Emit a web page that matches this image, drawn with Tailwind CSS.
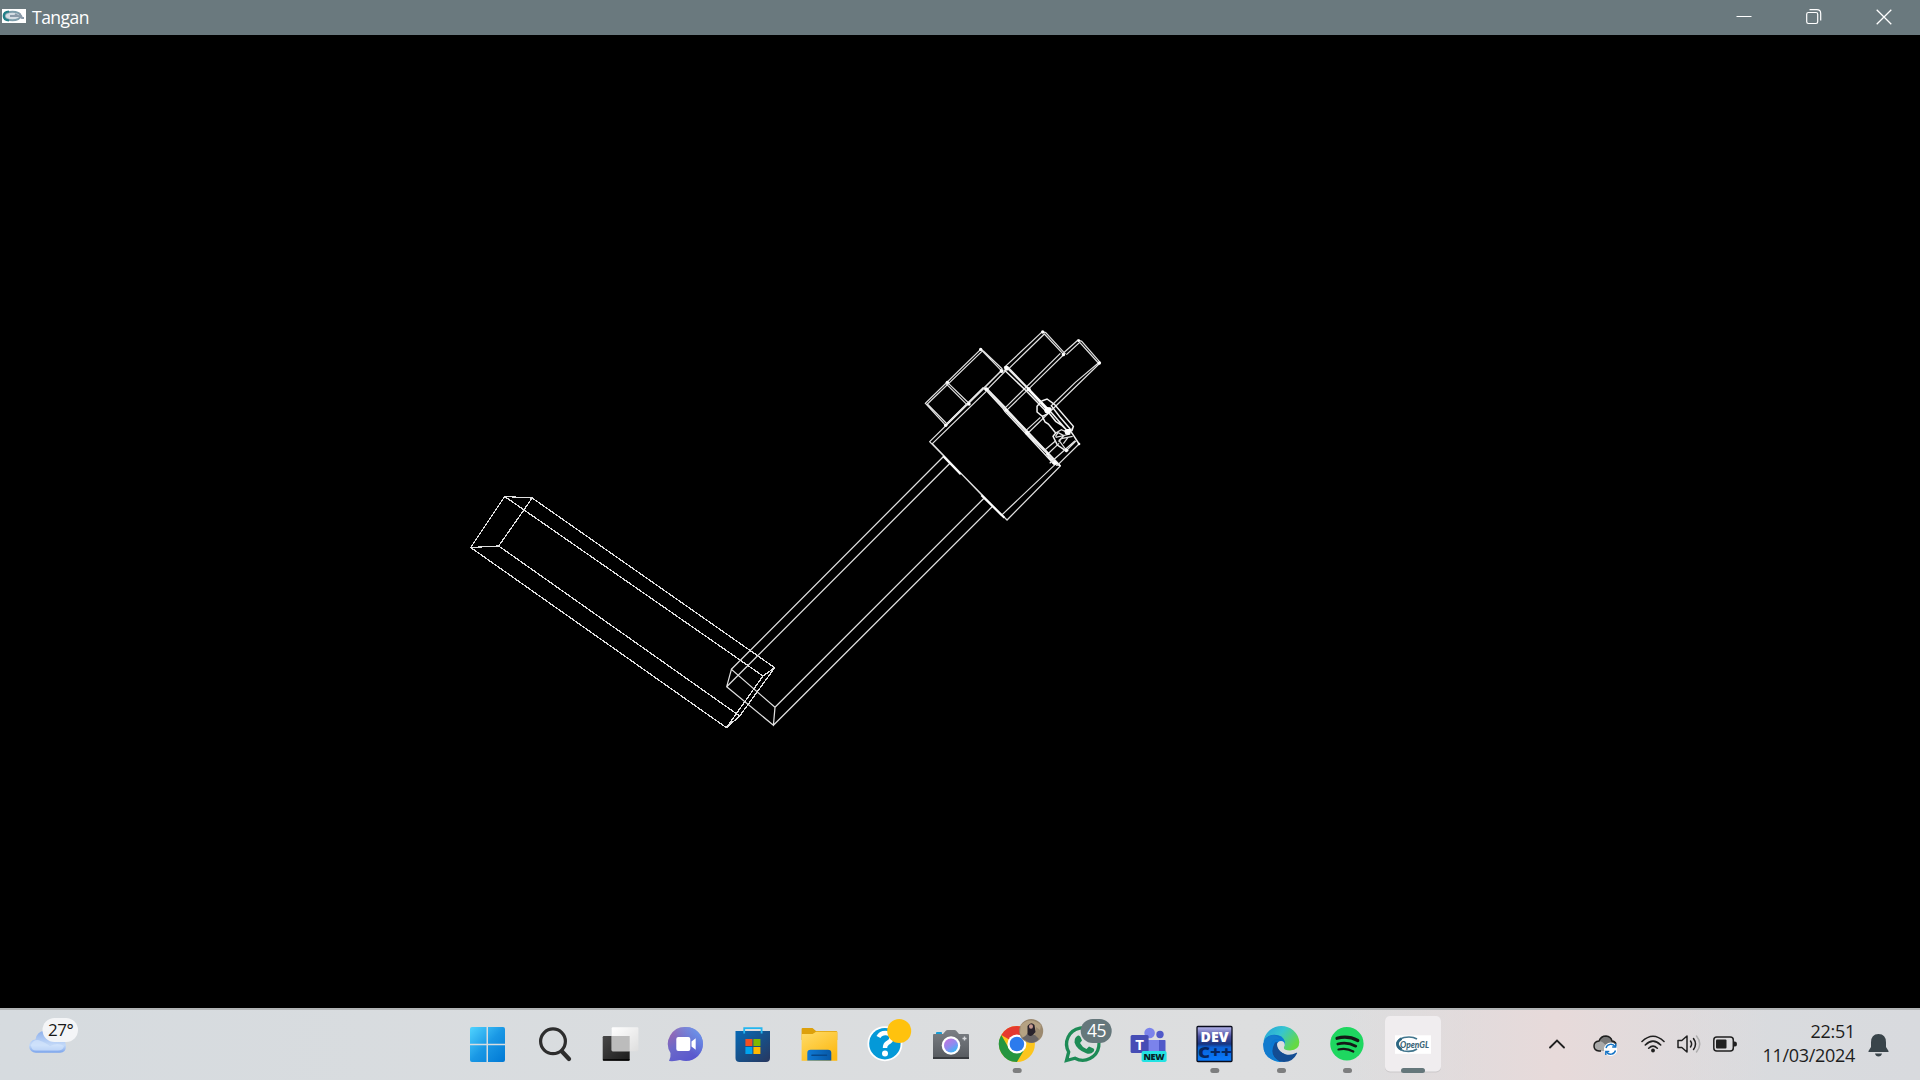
<!DOCTYPE html>
<html lang="id">
<head>
<meta charset="utf-8">
<title>Tangan</title>
<script src="https://cdn.jsdelivr.net/npm/@tailwindcss/browser@4"></script>
</head>
<body class="flex h-[1080px] w-[1920px] flex-col overflow-hidden bg-black font-['Open_Sans','Noto_Sans',sans-serif]">
<header class="flex h-[35px] shrink-0 items-center bg-[#6a797e] text-white">
  <svg class="ml-[2px] mt-[-3px] h-[14px] w-6" viewBox="0 0 24 14">
    <rect width="24" height="14" fill="#fff"/>
    <ellipse cx="10.500" cy="7" rx="8" ry="4.300" fill="#d3dce3" stroke="#7d9dab" stroke-width="2"/>
    <path d="M7 2.500C0 3 0 11 7 11.500" fill="none" stroke="#207f87" stroke-width="2.200"/>
    <path d="M8 7h8M13 5l7 4h2M17 4l3 4" fill="none" stroke="#8999a8" stroke-width="1.800"/>
  </svg>
  <h1 class="ml-[6px] -mt-px text-[17.500px] leading-6 font-normal tracking-[-0.5px]">Tangan</h1>
  <div class="ml-auto mr-[28px] mt-[-2px] flex items-center gap-[54px]">
    <svg class="h-4 w-4" viewBox="0 0 16 16"><path d="M.500 7.500h15" stroke="#fff" fill="none"/></svg>
    <svg class="h-4 w-4" viewBox="1 0.500 16 16" fill="none" stroke="#fff" stroke-width="1.200"><rect x="1.700" y="4" width="11" height="11" rx="1.700"/><path d="M4.500 1.200h7.200Q15.700 1.200 15.700 5v7"/></svg>
    <svg class="h-4 w-4" viewBox="0 0 16 16"><path d="M.700.700l14.600 14.600M15.300.700.700 15.300" stroke="#fff" stroke-width="1.300" fill="none"/></svg>
  </div>
</header>

<main class="h-[973px] shrink-0 bg-black">
  <svg class="block h-[973px] w-[1920px]" viewBox="0.300 35 1920 973" fill="none" stroke="#e0e0e0" stroke-width="1.250">
    <!-- upper arm -->
    <path d="M505 496.500L532.500 498L499 546L471 547.500ZM775 667.700L763.300 676L726.700 727.700L740 716ZM505 496.500L763.300 676M532.500 498L775 667.700M471 547.500L726.700 727.700M499 546L740 716" shape-rendering="crispEdges"/>
    <!-- forearm -->
    <path d="M731.700 669.300L727 686.700L773.700 725.300L775.300 707.300ZM731.700 669.300L943.300 457M727 686.700L950 463.500M775.300 707.300L984 498.500M773.700 725.300L992.700 506.500"/>
    <!-- hand -->
    <g transform="translate(910 320) scale(.33333)" stroke-width="3.700">
      <path d="M60 365L222 205L232 209L452 438L292 600ZM68 371L232 212L440 430L275 586ZM60 365L292 600"/>
      <path d="M100 408L153 463M215 526L284 593M108 316L222 203M452 438L425 417" stroke="#fff" stroke-width="6"/>
      <path d="M213 88L275 152L108 316L47 250ZM219 92L53 252L112 312M113 187L180 252M108 190L174 256M213 88L222 94L278 147"/>
      <path d="M275 152L225 203M290 150L233 208"/>
      <path d="M283 143L398 35L408 38L466 101L462 104M292 151L404 42L462 104L290 272M452 100L284 266"/>
      <path d="M462 98L505 60L516 64L572 128L352 342M470 104L510 67L566 129L497 187L424 258M392 292L346 334"/>
      <path d="M234 208L447 432M244 218L287 262L294 277L350 334L358 347L410 398L418 411L442 437M232 214L280 266L286 275L344 336L352 345L402 399L432 432" stroke="#efefef" stroke-width="4"/>
      <path d="M290 142L355 207L364 215L414 268M284 150L350 213L412 277M294 141L418 269" stroke="#efefef" stroke-width="4.500"/>
      <path d="M354 206L414 270" stroke="#fff" stroke-width="7"/>
      <g stroke="#f2f2f2" stroke-width="4.500">
        <path d="M396 243L412 237L434 253L491 319L487 331L470 329L415 266M396 243L382 259V276L398 289L416 280M398 289L406 306L416 312L438 339L430 349L443 375L462 388L471 396M508 372L490 344L480 330M415 275L438 304L455 315L477 336M424 256L450 290L481 326"/>
      </g>
      <path d="M438 339L455 329L477 339M438 352L482 342M447 366L455 356L489 349M461 371L475 352M437 350L445 338L463 347L448 361L470 391M508 372L442 437M496 362L420 430M438 362L402 393M448 370L411 405M471 391L500 362"/>
      <path d="M416 272l8-8M465 335l14-4-3 10" stroke="#fff" stroke-width="9"/>
      <g fill="#fff" stroke="none"><circle cx="213" cy="88" r="5"/><circle cx="113" cy="187" r="5"/><circle cx="178" cy="252" r="5"/><circle cx="276" cy="153" r="6"/><circle cx="290" cy="144" r="7"/><circle cx="399" cy="36" r="5"/><circle cx="461" cy="104" r="5"/><circle cx="507" cy="62" r="4"/><circle cx="569" cy="129" r="5"/><circle cx="230" cy="208" r="6"/><circle cx="108" cy="316" r="5"/><circle cx="290" cy="271" r="5"/><circle cx="352" cy="338" r="6"/><circle cx="357" cy="208" r="6"/><circle cx="414" cy="271" r="10"/><circle cx="414" cy="402" r="4"/><circle cx="434" cy="430" r="5"/><circle cx="508" cy="372" r="4"/><circle cx="474" cy="336" r="9"/><circle cx="471" cy="391" r="5"/></g>
    </g>
  </svg>
</main>

<footer class="flex h-[72px] shrink-0 border-t-2 border-[#b1b4b5] bg-linear-to-r from-[#d6dbdf] via-[#dddedf] via-65% to-[#d8dade]">
 <div class="flex h-[70px] w-full bg-linear-to-r from-transparent from-70% via-[#e7dada] via-81% to-transparent to-92%">
  <svg class="-mt-[2px] h-[72px] w-[454px] shrink-0" viewBox="0 0 454 72">
    <defs>
      <linearGradient id="cl" x2="0" y2="1"><stop stop-color="#8fb1ec"/><stop offset=".65" stop-color="#c3d9f8"/><stop offset="1" stop-color="#7ba4ec"/></linearGradient>
      <linearGradient id="win" x2="1" y2="1"><stop stop-color="#50d4ff"/><stop offset=".5" stop-color="#1a98e5"/><stop offset="1" stop-color="#0078d4"/></linearGradient>
      <linearGradient id="dark" x2="1" y2="1"><stop stop-color="#484848"/><stop offset="1" stop-color="#1b1b1b"/></linearGradient>
      <linearGradient id="lite" x2="1" y2="1"><stop stop-color="#fff"/><stop offset="1" stop-color="#dedede"/></linearGradient>
      <linearGradient id="chat" x2=".7" y2="1"><stop stop-color="#a768ab"/><stop offset=".5" stop-color="#6b68c9"/><stop offset="1" stop-color="#5755ce"/></linearGradient>
      <linearGradient id="chat2" x1="1" y1="0" x2="0" y2="1"><stop stop-color="#6ba0f3"/><stop offset=".55" stop-color="#6ba0f3" stop-opacity="0"/></linearGradient>
      <linearGradient id="store" x2="1" y2="1"><stop stop-color="#0669b5"/><stop offset="1" stop-color="#28375e"/></linearGradient>
      <linearGradient id="fold" x2=".7" y2="1"><stop stop-color="#ffdc69"/><stop offset="1" stop-color="#fcb913"/></linearGradient>
      <linearGradient id="blue"><stop stop-color="#0f7ad5"/><stop offset="1" stop-color="#0758a6"/></linearGradient>
      <linearGradient id="cam" x2="0" y2="1"><stop stop-color="#7b7f84"/><stop offset="1" stop-color="#55595e"/></linearGradient>
      <linearGradient id="lens" x2=".7" y2="1"><stop stop-color="#cb70dc"/><stop offset=".6" stop-color="#8c8cf0"/><stop offset="1" stop-color="#35b8f6"/></linearGradient>
      <linearGradient id="dev" x2="0" y2="1"><stop stop-color="#b9b9ef"/><stop offset=".28" stop-color="#4a50a0"/><stop offset=".5" stop-color="#19357f"/><stop offset=".6" stop-color="#0b63d8"/><stop offset="1" stop-color="#087cff"/></linearGradient>
      <linearGradient id="edge1" x2="1" y2=".55"><stop stop-color="#249fdb"/><stop offset=".5" stop-color="#36c5d0"/><stop offset="1" stop-color="#65d944"/></linearGradient>
      <linearGradient id="edge2" x2=".7" y2="1"><stop stop-color="#1468b4"/><stop offset=".4" stop-color="#0a79d5"/><stop offset="1" stop-color="#0c8de2"/></linearGradient>
    </defs>
    <path d="M36 44.800a6.500 6.500 0 0 1-.500-13.300q1.500-8.500 9-8.500 7 0 9 7 12.500-1 12.500 7.500 0 7.300-6 7.300Z" fill="url(#cl)"/>
    <path d="M31 37q3-7 10-4 5 2 9 5 8-4 14 0-1 4.500-6 4.500H36q-5 0-5-5.500Z" fill="#d6e7fc" opacity=".65"/>
    <rect x="42.500" y="10" width="35.500" height="24" rx="12" fill="#f6f7f8" fill-opacity=".95"/>
    <text x="48" y="27.800" font-size="17" letter-spacing="-.5" fill="#191919">27°</text>
  </svg>

  <nav class="-mt-[2px] grid h-[72px] w-[992px] shrink-0 grid-cols-[repeat(15,66.14px)]">
    <svg class="h-[72px] w-[66px]" viewBox="0 0 66 72"><path d="M18 19H32.500V35.700H16V21q0-2 2-2ZM34 19H49q2 0 2 2V35.700H34ZM16 37.200H32.500V54H18q-2 0-2-2ZM34 37.200H51V52q0 2-2 2H34Z" fill="url(#win)"/></svg>
    <svg class="h-[72px] w-[66px]" viewBox="0 0 66 72" fill="none" stroke="#2d2d2d"><circle cx="33" cy="33.300" r="12.400" stroke-width="3.200"/><path d="M42 43.500L49 51" stroke-width="4.300" stroke-linecap="round"/></svg>
    <svg class="h-[72px] w-[66px]" viewBox="0 0 66 72"><rect x="16.700" y="28" width="27" height="25" rx="1.200" fill="url(#dark)"/><path d="M17 51.700h26.500" stroke="#000"/><rect x="25.700" y="19.300" width="26.700" height="24" rx="1.200" fill="url(#lite)"/><path d="M25.700 28h18v15.300h-17q-1 0-1-1Z" fill="#bcbcbc"/></svg>
    <svg class="h-[72px] w-[66px]" viewBox="0 0 66 72"><path d="M34 19a17 17 0 0 1 0 34q-3 0-6-1-5 1.500-11 1 2-4 1.500-8a17 17 0 0 1 15.500-26Z" fill="url(#chat)"/><path d="M34 19a17 17 0 0 1 0 34q-3 0-6-1-5 1.500-11 1 2-4 1.500-8a17 17 0 0 1 15.500-26Z" fill="url(#chat2)"/><rect x="24.300" y="29" width="14" height="14" rx="2" fill="#fff"/><path d="M39.500 33.500l4.200-3.300v11.600l-4.200-3.300Z" fill="#fff"/></svg>
    <svg class="h-[72px] w-[66px]" viewBox="0 0 66 72"><path d="M17 23H51v27q0 4-4 4H20.500q-4 0-4-4V23.500Z" fill="url(#store)"/><path d="M25.200 25.500v-5.300h17.400v5.300" stroke="#25b6ef" stroke-width="1.800" fill="none"/><path d="M26.400 31h7v7h-7Z" fill="#f25022"/><path d="M34.400 31h7v7h-7Z" fill="#7fba00"/><path d="M26.400 39h7v7h-7Z" fill="#00a4ef"/><path d="M34.400 39h7v7h-7Z" fill="#ffb900"/></svg>
    <svg class="h-[72px] w-[66px]" viewBox="0 0 66 72"><path d="M16.600 21q0-1 1-1H27.500l3.500 3H51q1.300 0 1.300 1.300V32H16.600Z" fill="#dda00b"/><path d="M16.600 26h11l3.500-2.300H52.300V52.700H16.600Z" fill="url(#fold)"/><path d="M22.300 52.500V45q0-3.300 3.300-3.300H43q3.300 0 3.300 3.300v7.500Z" fill="url(#blue)"/><path d="M27 47.200h14.500" stroke="#06488b" stroke-width="1.600" stroke-linecap="round"/></svg>
    <svg class="h-[72px] w-[66px]" viewBox="0 0 66 72"><circle cx="33.900" cy="35.700" r="17.500" fill="#fff"/><circle cx="33.900" cy="35.700" r="15.700" fill="#0499d8"/><path d="M27.500 29q2-4 7-4 6 0 6 5 0 3-4 5-2.500 1.500-2.500 5" fill="none" stroke="#fff" stroke-width="4.400"/><circle cx="34" cy="45.500" r="3" fill="#fff"/><circle cx="48.200" cy="23" r="12" fill="#ffc20e"/></svg>
    <svg class="h-[72px] w-[66px]" viewBox="0 0 66 72"><rect x="19" y="24" width="6" height="4" rx="1" fill="#139dd7"/><path d="M17 26h9l3-3.500q.500-.500 1.500-.500h7q1 0 1.500.500l3 3.500H51q1 0 1 1v24H16V27q0-1 1-1Z" fill="url(#cam)"/><path d="M16 50h36" stroke="#373a3e" stroke-width="2"/><circle cx="34" cy="37.500" r="9.300" fill="#fff"/><circle cx="34" cy="37.500" r="7" fill="url(#lens)"/><path d="M47.500 28.500v4M45.500 30.500h4" stroke="#d7d9dd" stroke-width="1.400"/></svg>
    <svg class="h-[72px] w-[66px]" viewBox="0 0 66 72"><circle cx="33.900" cy="36" r="18" fill="#fcc51d"/><path d="M18.300 27a18 18 0 0 1 31.200 0H34v9Z" fill="#e5392f"/><path d="M18.300 27A18 18 0 0 0 33.900 54L42 40.500 34 36 26 40.500Z" fill="#25963f"/><circle cx="33.900" cy="36" r="9.500" fill="#fff"/><circle cx="33.900" cy="36" r="7.300" fill="#2c7bed"/><circle cx="48.200" cy="23" r="12" fill="#9c8a70"/><path d="M38 17q9-9 20 0l-1 5-4-3-2 11-9 3-5-8Z" fill="#b5a283"/><path d="M39 30q3-1 6-5l7 2 4 4q-7 8-17-1Z" fill="#6a6565"/><path d="M44.500 18q3.500-5 7-1l1 7q-5 7-8 2Z" fill="#29222b"/><ellipse cx="48" cy="18.500" rx="2" ry="2.300" fill="#c69a90"/><rect x="29.700" y="60" width="9" height="5" rx="2.500" fill="#7d7e7f"/></svg>
    <svg class="h-[72px] w-[66px]" viewBox="0 0 66 72"><path d="M17.500 52.500l2.200-8.500A16.200 16.200 0 1 1 26 50.200Z" fill="none" stroke="#1d8b56" stroke-width="3.300"/><path d="M27 29l2-1.500q1.500-.500 2.500 1.500l1.500 3.500-2 2.500q2 4 6.500 6l2.500-2.500 4.500 2q1.500 1 .200 3-3 3.500-7.500 1.800Q27.500 41.500 25.500 34.500 25 31 27 29Z" fill="#1d8b56"/><rect x="31.700" y="11" width="31" height="24" rx="12" fill="#65777b"/><text x="38" y="29" font-size="17.500" letter-spacing="-.600" fill="#fff">45</text></svg>
    <svg class="h-[72px] w-[66px]" viewBox="0 0 66 72"><circle cx="34.600" cy="25" r="5.300" fill="#7b83eb"/><circle cx="45" cy="26.500" r="3.700" fill="#5059c9"/><path d="M38 32H50q.500 0 .500 1v13H38Z" fill="#5059c9"/><path d="M28 32H44V46H28Z" fill="#7b83eb"/><rect x="15.600" y="27" width="18" height="18" rx="1.500" fill="#464db5"/><text x="24.500" y="41.500" font-size="15" font-weight="700" text-anchor="middle" fill="#fff">T</text><rect x="26.600" y="43" width="25" height="11" rx="1.800" fill="#22e3e3"/><text x="39" y="51.900" font-size="9" font-weight="800" text-anchor="middle" fill="#082328" textLength="21">NEW</text></svg>
    <svg class="h-[72px] w-[66px]" viewBox="0 0 66 72"><rect x="16" y="18.500" width="35" height="35" rx="1" fill="url(#dev)" stroke="#080b1b" stroke-width="1.300"/><text x="33.500" y="34" font-size="14" font-weight="800" text-anchor="middle" fill="#fff" textLength="28" lengthAdjust="spacingAndGlyphs">DEV</text><text x="34" y="50" font-size="16" font-weight="800" text-anchor="middle" fill="#07265f" textLength="34" lengthAdjust="spacingAndGlyphs">C++</text><rect x="29.300" y="60" width="9" height="5" rx="2.500" fill="#7d7e7f"/></svg>
    <svg class="h-[72px] w-[66px]" viewBox="0 0 66 72"><path d="M15.500 34A18 18 0 0 1 51.300 34Q51.500 42 42 42.500 35 42.500 36 39 38 34 33 31 24 25 15.500 34Z" fill="url(#edge1)"/><path d="M15.300 36Q17 27 26 26.700 35 26.500 37 34 37 37 35.700 38 35 34 31.500 34 25 37 27.500 44 33 53 44 49 35 56 27 53 15 49 15.300 36Z" fill="url(#edge2)"/><path d="M27 34.500Q20 47 31.500 53.500 44 56 49 45.500 49.500 44 48 44.500 36 49 30.500 41 28.500 38 29.500 34Z" fill="#134d93"/><path d="M17 31Q25 23 32 31q-10-1-10 9 1 9 8 13Q15 51 15.300 36Z" fill="#127bce"/><circle cx="33" cy="36.500" r="3.600" fill="#dcdddf"/><path d="M30 38q2 6 10 6.500 6 0 9-2l-.500 2.300q-6 3-11 1.400Q31 44 30 38Z" fill="#dcdddf"/><rect x="29" y="60" width="9" height="5" rx="2.500" fill="#7d7e7f"/></svg>
    <svg class="h-[72px] w-[66px]" viewBox="0 0 66 72"><circle cx="32.900" cy="35.700" r="16.700" fill="#1ed760"/><g fill="none" stroke="#141816" stroke-linecap="round"><path d="M23 30.300q11-3 20.800 2.200" stroke-width="3.200"/><path d="M23.800 36q9.500-2.500 18 2.200" stroke-width="2.700"/><path d="M24.500 41.500q8-2 14.800 2" stroke-width="2.200"/></g><rect x="29" y="60" width="9" height="5" rx="2.500" fill="#7d7e7f"/></svg>
    <svg class="h-[72px] w-[66px]" viewBox="0 0 66 72"><rect x="5" y="8.500" width="56" height="56" rx="5" fill="#cbc8ca"/><rect x="5" y="8" width="56" height="55.500" rx="5" fill="#f0edef"/><rect x="15" y="27.300" width="36" height="18.500" fill="#fff"/><path d="M37 31q-5-3-13-1.500-7 2-7 6.500 0 5 7 7 8 1.500 13-2" fill="none" stroke="#41758d" stroke-width="1.700"/><path d="M21.500 30.500q-8 5.500 0 11" fill="none" stroke="#2c6682" stroke-width="2.600"/><text x="20" y="40" font-family="Lato" font-size="10" font-weight="900" font-style="italic" fill="#3c6679" textLength="29" lengthAdjust="spacingAndGlyphs">OpenGL</text><rect x="21" y="60" width="24" height="5" rx="2.500" fill="#65777b"/></svg>
  </nav>

  <div class="mr-[31px] ml-auto flex h-[70px] items-center">
    <svg class="mr-[28px] -mt-[2px] h-6 w-4" viewBox="0 0 16 24"><path d="M1 15.500L8 8.500l7 7" fill="none" stroke="#202020" stroke-width="1.800" stroke-linecap="round"/></svg>
    <svg class="mr-[24px] -mt-[2px] h-6 w-6" viewBox="0 0 24 24"><path d="M6 19Q1 18.500 1 14q0-4.500 5-5 2-5 7-5 5 .500 6 5 5 .500 4.500 5-.500 5-5 5Z" fill="#a9a9a9"/><path d="M6 9q2-5 7-5t6 5q4 0 4.500 5L14 15Q10 9 6 9Z" fill="#777"/><path d="M8 19H6Q1 18.500 1 14q0-4.500 5-5 2-5 7-5 5 .500 6 5 3 .200 4 2.800" fill="none" stroke="#1e1e1e" stroke-width="1.500"/><circle cx="17.700" cy="17.300" r="6.700" fill="#fff"/><g fill="none" stroke="#1473c5" stroke-width="1.400"><path d="M13 16a5 5 0 0 1 9-1.500M22.500 18.500a5 5 0 0 1-9 1.500"/><path d="M22.700 11.500v3.500h-3.500M12.800 23v-3.500h3.500"/></g></svg>
    <svg class="mr-[12px] -mt-[2px] h-6 w-6" viewBox="0 0 24 24" fill="none" stroke="#202020" stroke-width="1.600" stroke-linecap="round"><path d="M1 9.500Q12-1 23 9.500M4.300 13Q12 5.200 19.700 13M7.700 16.200Q12 12 16.300 16.200"/><circle cx="12" cy="18.500" r="1.900" fill="#202020" stroke="none"/></svg>
    <svg class="mr-[12px] -mt-[2px] h-6 w-6" viewBox="0 0 24 24" fill="none" stroke="#202020" stroke-width="1.500" stroke-linecap="round" stroke-linejoin="round"><path d="M1 8.500h3.800L10 4v16l-5.200-4.500H1Z"/><path d="M13.500 9q2.200 3 0 6M16.500 6.500q4 5.500 0 11"/><path d="M19.500 4q6.500 8 0 16" stroke="#adadad"/></svg>
    <svg class="mr-[24px] -mt-[2px] h-6 w-6" viewBox="0 0 24 24"><rect x=".800" y="5" width="19.500" height="14" rx="3" fill="none" stroke="#202020" stroke-width="1.500"/><rect x="3" y="7.500" width="10.500" height="9" rx="1" fill="#202020"/><path d="M20.500 9.500H22q2 0 2 2.500t-2 2.500h-1.500Z" fill="#202020"/></svg>
    <div class="-mt-[4px] mr-[13px] flex w-[94px] flex-col items-end text-[18px] leading-6 tracking-[-0.3px] whitespace-nowrap text-[#1d1d1d]"><span>22:51</span><span>11/03/2024</span></div>
    <svg class="-mt-[1px] h-6 w-[21px]" viewBox="0 0 21 24"><path d="M3 9.500Q3 1 10.500 1T18 9.500V14l2.500 4v1H.500v-1L3 14ZM7 20.500h7q-.700 3-3.500 3T7 20.500Z" fill="#39444a"/></svg>
  </div>
 </div>
</footer>
</body>
</html>
